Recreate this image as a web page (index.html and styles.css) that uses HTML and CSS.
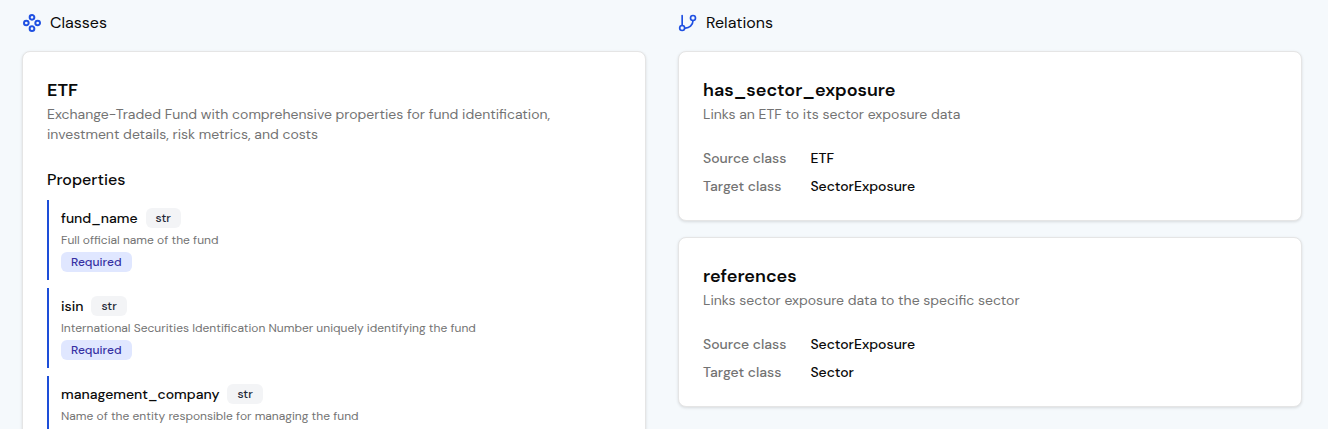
FILE: index.html
```html
<!DOCTYPE html>
<html lang="en">
<head>
<meta charset="utf-8">
<title>Classes and relations</title>
<link rel="stylesheet" href="styles.css">
</head>
<body>
<main class="page">
  <section class="column">
    <h2 class="section-title">
      <svg class="icon icon-bold" viewBox="0 0 24 24" aria-hidden="true"><circle cx="12" cy="5.200" r="2.800"/><circle cx="5.200" cy="12" r="2.800"/><circle cx="18.800" cy="12" r="2.800"/><circle cx="12" cy="18.800" r="2.800"/></svg>
      Classes
    </h2>
    <article class="card">
      <h3 class="card-title">ETF</h3>
      <p class="card-text">Exchange-Traded Fund with comprehensive properties for fund identification, investment details, risk metrics, and costs</p>
      <h4 class="properties-title">Properties</h4>
      <ul class="properties">
        <li class="property">
          <div class="property-head"><span class="property-name">fund_name</span><span class="badge badge-type">str</span></div>
          <p class="property-text">Full official name of the fund</p>
          <span class="badge badge-required">Required</span>
        </li>
        <li class="property">
          <div class="property-head"><span class="property-name">isin</span><span class="badge badge-type">str</span></div>
          <p class="property-text">International Securities Identification Number uniquely identifying the fund</p>
          <span class="badge badge-required">Required</span>
        </li>
        <li class="property">
          <div class="property-head"><span class="property-name">management_company</span><span class="badge badge-type">str</span></div>
          <p class="property-text">Name of the entity responsible for managing the fund</p>
        </li>
      </ul>
    </article>
  </section>
  <section class="column">
    <h2 class="section-title">
      <svg class="icon" viewBox="0 0 24 24" aria-hidden="true"><path d="M5 3v12"/><circle cx="18" cy="6" r="3"/><circle cx="5" cy="18" r="3"/><path d="M18 9a9 9 0 0 1-10 9"/></svg>
      Relations
    </h2>
    <article class="card">
      <h3 class="card-title">has_sector_exposure</h3>
      <p class="card-text">Links an ETF to its sector exposure data</p>
      <dl class="details">
        <dt>Source class</dt><dd>ETF</dd>
        <dt>Target class</dt><dd>SectorExposure</dd>
      </dl>
    </article>
    <article class="card">
      <h3 class="card-title">references</h3>
      <p class="card-text">Links sector exposure data to the specific sector</p>
      <dl class="details">
        <dt>Source class</dt><dd>SectorExposure</dd>
        <dt>Target class</dt><dd>Sector</dd>
      </dl>
    </article>
  </section>
</main>
</body>
</html>
```
FILE: styles.css
```css
* { box-sizing: border-box; margin: 0; padding: 0; }

body {
  height: 100vh;
  overflow: hidden;
  background: #f5f9fc;
  color: #0a0a0a;
  font-family: "DM Sans", Inter, sans-serif;
  font-size: 14px;
  line-height: 20px;
}

.page {
  display: grid;
  grid-template-columns: 1fr 1fr;
  align-items: start;
  gap: 32px;
  padding: 11px 26px 24px 22px;
}

.column { display: flex; flex-direction: column; gap: 16px; }

.section-title {
  display: flex;
  align-items: center;
  gap: 8px;
  font-size: 16px;
  line-height: 24px;
  font-weight: 400;
}

.icon {
  width: 20px;
  height: 20px;
  fill: none;
  stroke: #1f50e2;
  stroke-width: 2;
  stroke-linecap: round;
  stroke-linejoin: round;
}

.icon-bold { stroke-width: 2.4; }

.card {
  padding: 24px;
  background: #fff;
  border: 1px solid #e5e5e5;
  border-radius: 8px;
  box-shadow: 0 1px 3px rgba(0, 0, 0, 0.12);
}

.card-title { font-size: 18px; line-height: 28px; font-weight: 600; }
.card-text { color: #737373; }

.properties-title {
  margin: 24px 0 8px;
  font-size: 16px;
  line-height: 24px;
  font-weight: 500;
}

.properties { display: flex; flex-direction: column; gap: 8px; list-style: none; }

.property {
  display: flex;
  flex-direction: column;
  align-items: flex-start;
  gap: 4px;
  padding: 8px 0 8px 12px;
  border-left: 2px solid #1d4ed8;
}

.property-head { display: flex; align-items: center; gap: 8px; }
.property-name { font-weight: 500; }
.property-text { color: #737373; font-size: 12px; line-height: 16px; }

.badge {
  padding: 0 10px;
  border-radius: 6px;
  font-size: 12px;
  line-height: 20px;
  font-weight: 500;
}

.badge-type { background: #f3f4f6; color: #1f2937; }
.badge-required { background: #e0e7ff; color: #3730a3; }

.details {
  display: grid;
  grid-template-columns: max-content 1fr;
  gap: 8px 24px;
  margin-top: 24px;
}

.details dt { color: #737373; font-weight: 500; }
.details dd { font-weight: 500; }
```
